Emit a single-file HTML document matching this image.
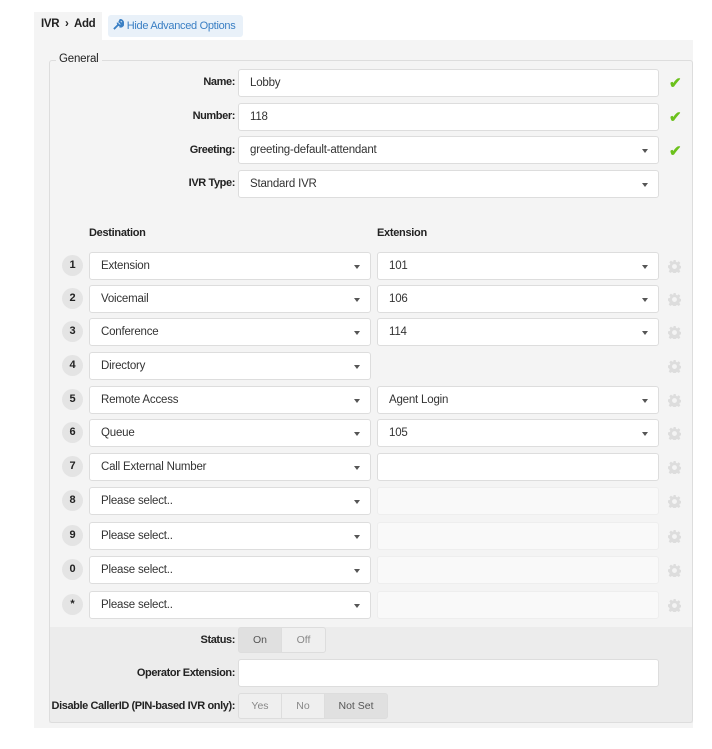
<!DOCTYPE html>
<html><head><style>
*{box-sizing:border-box;margin:0;padding:0}
body{width:712px;height:749px;background:#fff;font-family:"Liberation Sans",sans-serif;font-size:12px;color:#333;position:relative;overflow:hidden}
.a{position:absolute}
.inp{position:absolute;background:#fff;border:1px solid #ddd;border-radius:3px;height:28px;padding-left:11px;line-height:26px;font-size:11.5px;letter-spacing:-0.2px;color:#333}
.dis{background:#f9f9f9;border-color:#eee}
.car{position:absolute;right:10px;top:12px;width:0;height:0;border-left:3px solid transparent;border-right:3px solid transparent;border-top:4px solid #555}
.lbl{position:absolute;font-weight:bold;text-align:right;right:477px;font-size:11px;letter-spacing:-0.4px;color:#222;white-space:nowrap}
.num{position:absolute;left:62px;width:21px;height:21px;border-radius:50%;background:#e4e4e4;font-weight:bold;text-align:center;line-height:21px;font-size:11px;color:#222}
.chk{position:absolute;left:669px;color:#6bc11c;font-size:15px;font-weight:bold}
.gear{position:absolute;left:668px}
.btn{position:absolute;height:26px;border:1px solid #ddd;line-height:24px;text-align:center;font-size:10.5px;color:#888;background:#efefef}
</style></head><body>
<div class="a" style="left:34px;top:12px;width:68px;height:30px;background:#f4f4f4"></div>
<div class="a" style="left:41px;top:18px;font-weight:bold;font-size:11.5px;letter-spacing:-0.3px;color:#222">IVR &nbsp;›&nbsp; Add</div>
<div class="a" style="left:108px;top:15px;width:135px;height:22px;background:#e9f1f9;border-radius:3px;color:#3a7fc4;font-size:11px;letter-spacing:-0.3px;line-height:22px;padding-left:5px;white-space:nowrap">
<svg width="11" height="11" viewBox="0 0 12 12" style="vertical-align:-1px"><path d="M1 11 L6 6 M5 4 a3 3 0 1 0 3-3 L7 3 L9 5 L11 4 a3 3 0 0 1-4 4" stroke="#3a7fc4" stroke-width="2" fill="none"/></svg> Hide Advanced Options</div>
<div class="a" style="left:34px;top:40px;width:659px;height:688px;background:#f4f4f4"></div>
<div class="a" style="left:49px;top:627px;width:644px;height:96px;background:#ececec"></div>
<div class="a" style="left:49px;top:60px;width:644px;height:663px;border:1px solid #ddd;border-radius:3px"></div>
<div class="a" style="left:56px;top:53px;background:#f4f4f4;padding:0 3px;font-size:11.5px;letter-spacing:-0.2px;color:#222">General</div>

<div class="lbl" style="top:76px">Name:</div><div class="inp" style="left:238px;top:69px;width:421px">Lobby</div><div class="chk" style="top:74px">✔</div>
<div class="lbl" style="top:110px">Number:</div><div class="inp" style="left:238px;top:103px;width:421px">118</div><div class="chk" style="top:108px">✔</div>
<div class="lbl" style="top:144px">Greeting:</div><div class="inp" style="left:238px;top:136px;width:421px">greeting-default-attendant<span class="car"></span></div><div class="chk" style="top:142px">✔</div>
<div class="lbl" style="top:177px">IVR Type:</div><div class="inp" style="left:238px;top:170px;width:421px">Standard IVR<span class="car"></span></div>

<div class="a" style="left:89px;top:227px;font-weight:bold;font-size:11px;letter-spacing:-0.3px;color:#222">Destination</div>
<div class="a" style="left:377px;top:227px;font-weight:bold;font-size:11px;letter-spacing:-0.3px;color:#222">Extension</div>

<div id="rows"></div>
<script>
var R=[["1","Extension","101",1],["2","Voicemail","106",1],["3","Conference","114",1],["4","Directory",null,0],["5","Remote Access","Agent Login",1],["6","Queue","105",1],["7","Call External Number","",2],["8","Please select..","",3],["9","Please select..","",3],["0","Please select..","",3],["*","Please select..","",3]];
var T=[252,285,318,352,386,419,453,487,522,556,591],h="";
var g='<svg width="13" height="13" viewBox="0 0 16 16"><path fill="#ddd" d="M6.6 0h2.8l.4 2.2 1.5.7 1.9-1.3 2 2-1.3 1.9.7 1.5 2.2.4v2.8l-2.2.4-.7 1.5 1.3 1.9-2 2-1.9-1.3-1.5.7-.4 2.2H6.6l-.4-2.2-1.5-.7-1.9 1.3-2-2 1.3-1.9-.7-1.5L0 9.4V6.6l2.2-.4.7-1.5-1.3-1.9 2-2 1.9 1.3 1.5-.7zM8 5a3 3 0 1 0 0 6 3 3 0 0 0 0-6z"/></svg>';
R.forEach(function(r,i){var t=T[i];
h+='<div class="num" style="top:'+(t+3)+'px">'+r[0]+'</div>';
h+='<div class="inp" style="left:89px;top:'+t+'px;width:282px">'+r[1]+'<span class="car"></span></div>';
if(r[3]==1)h+='<div class="inp" style="left:377px;top:'+t+'px;width:282px">'+r[2]+'<span class="car"></span></div>';
if(r[3]==2)h+='<div class="inp" style="left:377px;top:'+t+'px;width:282px"></div>';
if(r[3]==3)h+='<div class="inp dis" style="left:377px;top:'+t+'px;width:282px"></div>';
h+='<div class="gear" style="top:'+(t+8)+'px">'+g+'</div>';});
document.getElementById("rows").innerHTML=h;
</script>

<div class="lbl" style="top:634px">Status:</div>
<div class="btn" style="left:238px;top:627px;width:44px;background:#e0e0e0;color:#555;border-radius:3px 0 0 3px">On</div>
<div class="btn" style="left:281px;top:627px;width:45px;border-radius:0 3px 3px 0">Off</div>
<div class="lbl" style="top:667px">Operator Extension:</div>
<div class="inp" style="left:238px;top:659px;width:421px"></div>
<div class="lbl" style="top:700px">Disable CallerID (PIN-based IVR only):</div>
<div class="btn" style="left:238px;top:693px;width:44px;border-radius:3px 0 0 3px">Yes</div>
<div class="btn" style="left:281px;top:693px;width:44px">No</div>
<div class="btn" style="left:324px;top:693px;width:64px;background:#e0e0e0;color:#555;border-radius:0 3px 3px 0">Not Set</div>
</body></html>
